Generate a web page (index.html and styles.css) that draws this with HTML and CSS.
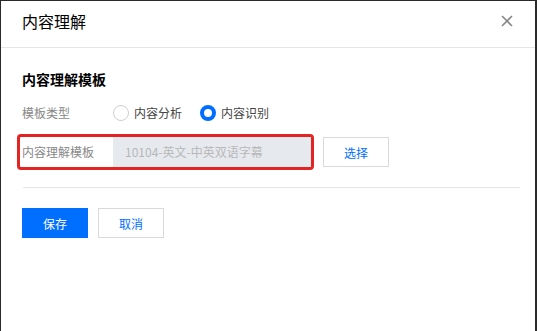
FILE: index.html
```html
<!DOCTYPE html>
<html lang="zh">
<head>
<meta charset="utf-8">
<link rel="stylesheet" href="styles.css">
</head>
<body>
<div class="frame">
  <div class="header">
    <div class="title">内容理解</div>
    <svg class="close" width="12" height="12" viewBox="0 0 12 12"><path d="M1 1L11 11M11 1L1 11" stroke="#888" stroke-width="1.6" fill="none"/></svg>
  </div>
  <div class="content">
    <div class="section-title">内容理解模板</div>
    <div class="row">
      <div class="label">模板类型</div>
      <label class="radio"><span class="dot"></span><span>内容分析</span></label>
      <label class="radio checked"><span class="dot"></span><span>内容识别</span></label>
    </div>
    <div class="row row-field">
      <div class="highlight">
        <div class="label">内容理解模板</div>
        <div class="input">10104-英文-中英双语字幕</div>
      </div>
      <button class="btn btn-default select">选择</button>
    </div>
    <div class="divider"></div>
    <div class="actions">
      <button class="btn btn-primary">保存</button>
      <button class="btn btn-default">取消</button>
    </div>
  </div>
</div>
</body>
</html>
```
FILE: styles.css
```css
* { box-sizing: border-box; }
html, body { margin: 0; padding: 0; background: #fff; }
body {
  font-family: "Noto Sans CJK SC", "Noto Sans", sans-serif;
  font-size: 12px;
  color: #333;
}
.frame {
  width: 537px;
  height: 331px;
  border-top: 1px solid #2a2a2a;
  border-left: 1px solid #2a2a2a;
  border-right: 2px solid #2a2a2a;
  background: #fff;
}
.header {
  height: 47px;
  border-bottom: 1px solid #e5e5e5;
  display: flex;
  justify-content: space-between;
  align-items: flex-start;
  padding: 8px 22px 0 21px;
}
.title {
  font-size: 16px;
  line-height: 24px;
  color: #000;
}
.close { margin-top: 6px; }
.content {
  padding: 21px 15px 0 21px;
}
.section-title {
  font-size: 14px;
  line-height: 20px;
  font-weight: bold;
  color: #000;
}
.row {
  display: flex;
  align-items: center;
  height: 30px;
  margin-top: 9px;
}
.label {
  width: 91px;
  color: #888;
  font-size: 12px;
  line-height: 30px;
  flex-shrink: 0;
}
.radio {
  display: flex;
  align-items: center;
  gap: 5px;
  margin-right: 18px;
  color: #444;
  line-height: 30px;
}
.dot {
  width: 16px;
  height: 16px;
  border-radius: 50%;
  border: 1px solid #cfcfcf;
  background: #fff;
}
.radio.checked .dot {
  border: 4px solid #006eff;
}
.row-field {
  margin-top: 6px;
  height: 36px;
}
.highlight {
  display: flex;
  align-items: center;
  margin-left: -5px;
  padding-left: 2px;
  width: 297px;
  height: 36px;
  border: 3px solid #e42323;
  border-radius: 4px;
}
.input {
  width: 198px;
  height: 30px;
  line-height: 30px;
  padding-left: 12px;
  background: #e6e9ee;
  color: #b8b8b8;
  white-space: nowrap;
}
.btn {
  width: 66px;
  height: 30px;
  font-family: inherit;
  font-size: 12px;
  padding: 0;
  border-radius: 0;
  cursor: pointer;
}
.btn-default {
  background: #fff;
  border: 1px solid #d9d9d9;
  color: #006eff;
}
.btn-primary {
  background: #006eff;
  border: 1px solid #006eff;
  color: #fff;
}
.select { margin-left: 9px; }
.divider {
  height: 1px;
  background: #e5e5e5;
  margin-top: 17px;
  margin-left: 1px;
}
.actions {
  display: flex;
  gap: 10px;
  margin-top: 20px;
}
```
